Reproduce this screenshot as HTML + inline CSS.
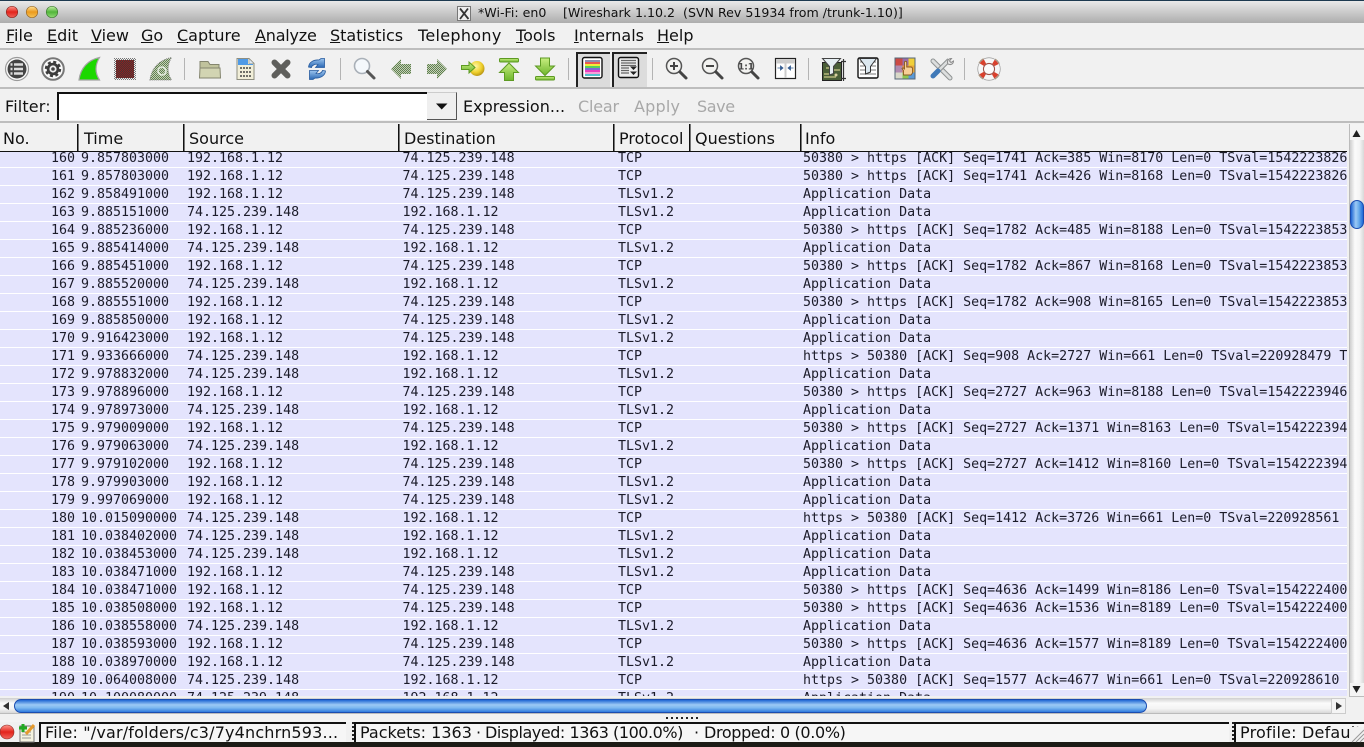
<!DOCTYPE html>
<html><head><meta charset="utf-8"><title>Wireshark</title>
<style>
html,body{margin:0;padding:0;width:1364px;height:747px;overflow:hidden;background:#f1f1f1}
body{position:relative;font-family:"DejaVu Sans",sans-serif;color:#111}
.a{position:absolute;white-space:pre}
#top{left:0;top:0;width:1364px;height:1px;background:#1d3a50}
#title{left:0;top:1px;width:1364px;height:22px;background:linear-gradient(#e9e9e9,#adadad)}
.tt{top:5px;font-size:12.6px;line-height:15px;color:#111}
.m{top:26px;font-size:16px;line-height:20px;color:#111}
.hl{left:0;width:1364px;height:2px;background:#bdbdbd}
.f{top:97px;font-size:16px;line-height:19px}
.g{color:#a8a8a8}
.h{top:129px;font-size:16px;line-height:20px;color:#111}
.v{top:124px;width:1px;height:27px;background:#111;box-shadow:1px 0 0 #777}
#hb{left:0;top:151px;width:1347px;height:1px;background:#111}
#list{left:0;top:152px;width:1347px;height:544px;overflow:hidden;background:#fff}
.r{position:absolute;left:0;width:1347px;height:17px;background:#e4e4fd;font:13.3px/17px "DejaVu Sans Mono",monospace;color:#1c1c2a;overflow:hidden}
.r b{font-weight:400;position:absolute;top:0;white-space:pre}
.r b:nth-child(1){right:1272px}
.r b:nth-child(2){left:81px}
.r b:nth-child(3){left:187px}
.r b:nth-child(4){left:402.500px}
.r b:nth-child(5){left:618px}
.r b:nth-child(6){left:803px}
.bx{top:722px;height:20px;background:#f6f6f6;border-top:2px solid #111;border-left:2px solid #111;box-sizing:border-box;overflow:hidden}
.s{top:723px;font-size:16px;line-height:19px;color:#111}
</style></head><body>
<div class="a" id="top"></div>
<div class="a" id="title"></div>
<div class="a tt" style="left:478px">*Wi-Fi: en0</div>
<div class="a tt" style="left:563px">[Wireshark 1.10.2  (SVN Rev 51934 from /trunk-1.10)]</div>

<div class="a m" style="left:6px"><u>F</u>ile</div>
<div class="a m" style="left:47px"><u>E</u>dit</div>
<div class="a m" style="left:91px"><u>V</u>iew</div>
<div class="a m" style="left:141px"><u>G</u>o</div>
<div class="a m" style="left:177px"><u>C</u>apture</div>
<div class="a m" style="left:255px;letter-spacing:-.2px"><u>A</u>nalyze</div>
<div class="a m" style="left:330px"><u>S</u>tatistics</div>
<div class="a m" style="left:418px;letter-spacing:.3px">Telephony</div>
<div class="a m" style="left:516px"><u>T</u>ools</div>
<div class="a m" style="left:574px"><u>I</u>nternals</div>
<div class="a m" style="left:657px"><u>H</u>elp</div>
<div class="a hl" style="top:48px"></div>
<div class="a hl" style="top:87px"></div>

<div class="a" style="left:576px;top:52px;width:34px;height:35px;background:#dcdcdc;border-top:2px solid #222;border-left:2px solid #222;box-sizing:border-box"></div>
<div class="a" style="left:612px;top:52px;width:35px;height:35px;background:#dcdcdc;border-top:2px solid #222;border-left:2px solid #222;box-sizing:border-box"></div>

<div class="a f" style="left:5px;letter-spacing:.15px">Filter:</div>
<div class="a" style="left:57px;top:92px;width:370px;height:28px;background:#fff;border-top:2px solid #111;border-left:2px solid #111;box-sizing:border-box"></div>
<div class="a" style="left:427px;top:92px;width:30px;height:28px;background:#efefef;border-right:1px solid #555;border-bottom:1px solid #555;border-top:1px solid #ccc;box-sizing:border-box"></div>
<div class="a f" style="left:463px">Expression...</div>
<div class="a f g" style="left:578px;letter-spacing:-.2px">Clear</div>
<div class="a f g" style="left:634px;letter-spacing:.2px">Apply</div>
<div class="a f g" style="left:697px;letter-spacing:-.4px">Save</div>
<div class="a hl" style="top:121px"></div>

<div class="a h" style="left:3px">No.</div>
<div class="a h" style="left:84px">Time</div>
<div class="a h" style="left:189px">Source</div>
<div class="a h" style="left:404px">Destination</div>
<div class="a h" style="left:619px">Protocol</div>
<div class="a h" style="left:695px">Questions</div>
<div class="a h" style="left:805px">Info</div>
<div class="a v" style="left:77px"></div>
<div class="a v" style="left:183px"></div>
<div class="a v" style="left:398px"></div>
<div class="a v" style="left:613px"></div>
<div class="a v" style="left:689px"></div>
<div class="a v" style="left:800px"></div>
<div class="a" id="hb"></div>

<div class="a" id="list">
<div class="r" style="top:-2px"><b>160</b><b>9.857803000</b><b>192.168.1.12</b><b>74.125.239.148</b><b>TCP</b><b>50380 &gt; https [ACK] Seq=1741 Ack=385 Win=8170 Len=0 TSval=1542223826</b></div>
<div class="r" style="top:16px"><b>161</b><b>9.857803000</b><b>192.168.1.12</b><b>74.125.239.148</b><b>TCP</b><b>50380 &gt; https [ACK] Seq=1741 Ack=426 Win=8168 Len=0 TSval=1542223826</b></div>
<div class="r" style="top:34px"><b>162</b><b>9.858491000</b><b>192.168.1.12</b><b>74.125.239.148</b><b>TLSv1.2</b><b>Application Data</b></div>
<div class="r" style="top:52px"><b>163</b><b>9.885151000</b><b>74.125.239.148</b><b>192.168.1.12</b><b>TLSv1.2</b><b>Application Data</b></div>
<div class="r" style="top:70px"><b>164</b><b>9.885236000</b><b>192.168.1.12</b><b>74.125.239.148</b><b>TCP</b><b>50380 &gt; https [ACK] Seq=1782 Ack=485 Win=8188 Len=0 TSval=1542223853</b></div>
<div class="r" style="top:88px"><b>165</b><b>9.885414000</b><b>74.125.239.148</b><b>192.168.1.12</b><b>TLSv1.2</b><b>Application Data</b></div>
<div class="r" style="top:106px"><b>166</b><b>9.885451000</b><b>192.168.1.12</b><b>74.125.239.148</b><b>TCP</b><b>50380 &gt; https [ACK] Seq=1782 Ack=867 Win=8168 Len=0 TSval=1542223853</b></div>
<div class="r" style="top:124px"><b>167</b><b>9.885520000</b><b>74.125.239.148</b><b>192.168.1.12</b><b>TLSv1.2</b><b>Application Data</b></div>
<div class="r" style="top:142px"><b>168</b><b>9.885551000</b><b>192.168.1.12</b><b>74.125.239.148</b><b>TCP</b><b>50380 &gt; https [ACK] Seq=1782 Ack=908 Win=8165 Len=0 TSval=1542223853</b></div>
<div class="r" style="top:160px"><b>169</b><b>9.885850000</b><b>192.168.1.12</b><b>74.125.239.148</b><b>TLSv1.2</b><b>Application Data</b></div>
<div class="r" style="top:178px"><b>170</b><b>9.916423000</b><b>192.168.1.12</b><b>74.125.239.148</b><b>TLSv1.2</b><b>Application Data</b></div>
<div class="r" style="top:196px"><b>171</b><b>9.933666000</b><b>74.125.239.148</b><b>192.168.1.12</b><b>TCP</b><b>https &gt; 50380 [ACK] Seq=908 Ack=2727 Win=661 Len=0 TSval=220928479 TSecr</b></div>
<div class="r" style="top:214px"><b>172</b><b>9.978832000</b><b>74.125.239.148</b><b>192.168.1.12</b><b>TLSv1.2</b><b>Application Data</b></div>
<div class="r" style="top:232px"><b>173</b><b>9.978896000</b><b>192.168.1.12</b><b>74.125.239.148</b><b>TCP</b><b>50380 &gt; https [ACK] Seq=2727 Ack=963 Win=8188 Len=0 TSval=1542223946</b></div>
<div class="r" style="top:250px"><b>174</b><b>9.978973000</b><b>74.125.239.148</b><b>192.168.1.12</b><b>TLSv1.2</b><b>Application Data</b></div>
<div class="r" style="top:268px"><b>175</b><b>9.979009000</b><b>192.168.1.12</b><b>74.125.239.148</b><b>TCP</b><b>50380 &gt; https [ACK] Seq=2727 Ack=1371 Win=8163 Len=0 TSval=154222394</b></div>
<div class="r" style="top:286px"><b>176</b><b>9.979063000</b><b>74.125.239.148</b><b>192.168.1.12</b><b>TLSv1.2</b><b>Application Data</b></div>
<div class="r" style="top:304px"><b>177</b><b>9.979102000</b><b>192.168.1.12</b><b>74.125.239.148</b><b>TCP</b><b>50380 &gt; https [ACK] Seq=2727 Ack=1412 Win=8160 Len=0 TSval=154222394</b></div>
<div class="r" style="top:322px"><b>178</b><b>9.979903000</b><b>192.168.1.12</b><b>74.125.239.148</b><b>TLSv1.2</b><b>Application Data</b></div>
<div class="r" style="top:340px"><b>179</b><b>9.997069000</b><b>192.168.1.12</b><b>74.125.239.148</b><b>TLSv1.2</b><b>Application Data</b></div>
<div class="r" style="top:358px"><b>180</b><b>10.015090000</b><b>74.125.239.148</b><b>192.168.1.12</b><b>TCP</b><b>https &gt; 50380 [ACK] Seq=1412 Ack=3726 Win=661 Len=0 TSval=220928561</b></div>
<div class="r" style="top:376px"><b>181</b><b>10.038402000</b><b>74.125.239.148</b><b>192.168.1.12</b><b>TLSv1.2</b><b>Application Data</b></div>
<div class="r" style="top:394px"><b>182</b><b>10.038453000</b><b>74.125.239.148</b><b>192.168.1.12</b><b>TLSv1.2</b><b>Application Data</b></div>
<div class="r" style="top:412px"><b>183</b><b>10.038471000</b><b>192.168.1.12</b><b>74.125.239.148</b><b>TLSv1.2</b><b>Application Data</b></div>
<div class="r" style="top:430px"><b>184</b><b>10.038471000</b><b>192.168.1.12</b><b>74.125.239.148</b><b>TCP</b><b>50380 &gt; https [ACK] Seq=4636 Ack=1499 Win=8186 Len=0 TSval=154222400</b></div>
<div class="r" style="top:448px"><b>185</b><b>10.038508000</b><b>192.168.1.12</b><b>74.125.239.148</b><b>TCP</b><b>50380 &gt; https [ACK] Seq=4636 Ack=1536 Win=8189 Len=0 TSval=154222400</b></div>
<div class="r" style="top:466px"><b>186</b><b>10.038558000</b><b>74.125.239.148</b><b>192.168.1.12</b><b>TLSv1.2</b><b>Application Data</b></div>
<div class="r" style="top:484px"><b>187</b><b>10.038593000</b><b>192.168.1.12</b><b>74.125.239.148</b><b>TCP</b><b>50380 &gt; https [ACK] Seq=4636 Ack=1577 Win=8189 Len=0 TSval=154222400</b></div>
<div class="r" style="top:502px"><b>188</b><b>10.038970000</b><b>192.168.1.12</b><b>74.125.239.148</b><b>TLSv1.2</b><b>Application Data</b></div>
<div class="r" style="top:520px"><b>189</b><b>10.064008000</b><b>74.125.239.148</b><b>192.168.1.12</b><b>TCP</b><b>https &gt; 50380 [ACK] Seq=1577 Ack=4677 Win=661 Len=0 TSval=220928610</b></div>
<div class="r" style="top:538px"><b>190</b><b>10.100080000</b><b>74.125.239.148</b><b>192.168.1.12</b><b>TLSv1.2</b><b>Application Data</b></div>
</div>

<!-- vertical scrollbar -->
<div class="a" style="left:1349px;top:124px;width:15px;height:573px;background:linear-gradient(90deg,#cfcfcf,#fbfbfb 35%,#f4f4f4 70%,#d8d8d8);border-left:1px solid #bbb;box-sizing:border-box"></div>
<div class="a" style="left:1349px;top:124px;width:15px;height:16px;background:#f4f4f4;border-left:1px solid #bbb;box-sizing:border-box"></div>
<div class="a" style="left:1349px;top:683px;width:15px;height:14px;background:#f4f4f4;border-left:1px solid #bbb;border-bottom:1px solid #bbb;box-sizing:border-box"></div>
<div class="a" style="left:1350px;top:200px;width:14px;height:29px;border-radius:7px;box-sizing:border-box;border:1px solid #1a4cb0;background:linear-gradient(90deg,#1f66d4,#9cc9f5 40%,#6aaceb 65%,#1f6ad8)"></div>

<!-- horizontal scrollbar -->
<div class="a" style="left:0;top:698px;width:1345px;height:16px;background:linear-gradient(#cfcfcf,#fbfbfb 35%,#f4f4f4 70%,#d8d8d8);border-bottom:1px solid #bbb;box-sizing:border-box"></div>
<div class="a" style="left:14px;top:699px;width:1133px;height:14px;border-radius:7px;box-sizing:border-box;border:1px solid #1a4cb0;background:linear-gradient(#1f66d4,#9cc9f5 40%,#7db8f0 65%,#2f7ade)"></div>
<div class="a" style="left:1331px;top:698px;width:15px;height:16px;background:#f4f4f4;border:1px solid #ccc;box-sizing:border-box"></div>

<!-- status bar -->
<div class="a" style="left:666px;top:717px;width:34px;height:2px;background:repeating-linear-gradient(90deg,#222 0 2px,transparent 2px 5px)"></div>
<div class="a" style="left:0;top:720px;width:1364px;height:2px;background:#f4f4f4"></div>
<div class="a bx" style="left:39px;width:307px"></div>
<div class="a bx" style="left:354px;width:875px"></div>
<div class="a bx" style="left:1234px;width:130px"></div>
<div class="a s" style="left:45px;letter-spacing:.17px">File: "/var/folders/c3/7y4nchrn593...</div>
<div class="a s" style="left:360px">Packets: 1363</div>
<div class="a s" style="left:476px">·</div>
<div class="a s" style="left:485px;letter-spacing:-.45px">Displayed: 1363 (100.0%)</div>
<div class="a s" style="left:694px">·</div>
<div class="a s" style="left:704px;letter-spacing:-.35px">Dropped: 0 (0.0%)</div>
<div class="a s" style="left:1240px;width:124px;overflow:hidden;letter-spacing:.2px">Profile: Default</div>
<div class="a" style="left:352px;top:722px;width:2px;height:20px;background:repeating-linear-gradient(#222 0 2px,transparent 2px 4px)"></div>
<div class="a" style="left:1232px;top:722px;width:2px;height:20px;background:repeating-linear-gradient(#222 0 2px,transparent 2px 4px)"></div>
<div class="a" style="left:0;top:742px;width:1364px;height:5px;background:#1c1b16"></div>

<svg class="a" style="left:0;top:0" width="1364" height="747" viewBox="0 0 1364 747">
<defs>
<pattern id="dg" width="2" height="2" patternUnits="userSpaceOnUse"><rect width="2" height="2" fill="#c4cfb6"/><rect width="1" height="1" fill="#5f8050"/><rect x="1" y="1" width="1" height="1" fill="#5f8050"/></pattern>
<pattern id="dr" width="2" height="2" patternUnits="userSpaceOnUse"><rect width="2" height="2" fill="#453535"/><rect width="1" height="1" fill="#8e2020"/><rect x="1" y="1" width="1" height="1" fill="#8e2020"/></pattern>
<pattern id="dk" width="2" height="2" patternUnits="userSpaceOnUse"><rect width="1" height="1" fill="#777"/><rect x="1" y="1" width="1" height="1" fill="#777"/></pattern>
<linearGradient id="rl" x1="0" y1="0" x2="0" y2="1"><stop offset="0" stop-color="#ff9a90"/><stop offset=".5" stop-color="#e3241c"/><stop offset="1" stop-color="#f0655c"/></linearGradient>
<linearGradient id="yl" x1="0" y1="0" x2="0" y2="1"><stop offset="0" stop-color="#ffe39a"/><stop offset=".5" stop-color="#eb9a1e"/><stop offset="1" stop-color="#f7c65a"/></linearGradient>
<linearGradient id="gl" x1="0" y1="0" x2="0" y2="1"><stop offset="0" stop-color="#c6f0a8"/><stop offset=".5" stop-color="#52b53a"/><stop offset="1" stop-color="#93dc78"/></linearGradient>
<linearGradient id="ga" x1="0" y1="0" x2="0" y2="1"><stop offset="0" stop-color="#c8ee80"/><stop offset="1" stop-color="#6db52c"/></linearGradient>
<radialGradient id="ball" cx=".4" cy=".35" r=".7"><stop offset="0" stop-color="#fff6a8"/><stop offset=".6" stop-color="#efd02c"/><stop offset="1" stop-color="#b08c10"/></radialGradient>
<linearGradient id="bl" x1="0" y1="0" x2="0" y2="1"><stop offset="0" stop-color="#9cc4ee"/><stop offset="1" stop-color="#2a68b4"/></linearGradient>
<g id="mag"><circle cx="-3" cy="-3" r="7.500" fill="#f2f2f0" stroke="#555" stroke-width="1.500"/><path d="M3 3L9 9" stroke="#444" stroke-width="3" stroke-linecap="round"/></g>
</defs>

<!-- traffic lights -->
<circle cx="12" cy="12" r="5.700" fill="url(#rl)" stroke="#8a2a24" stroke-width=".7"/>
<circle cx="32" cy="12" r="5.700" fill="url(#yl)" stroke="#96682a" stroke-width=".7"/>
<circle cx="52" cy="12" r="5.700" fill="url(#gl)" stroke="#3f7a34" stroke-width=".7"/>
<!-- X11 icon -->
<rect x="457.500" y="6.500" width="13" height="14" fill="#eee" stroke="#777"/>
<path d="M460 8.500L468.500 19M468 8.500L460 19" stroke="#333" stroke-width="1.800"/>

<!-- interfaces -->
<circle cx="17" cy="69" r="11.500" fill="#fbfbfb" stroke="#999" stroke-width="1.200"/>
<circle cx="17" cy="69" r="9.500" fill="#444"/>
<path d="M14 64.500H23M14 69H23M14 73.500H23" stroke="#ddd" stroke-width="2.400"/>
<path d="M10.500 64.500h2M10.500 69h2M10.500 73.500h2" stroke="#ddd" stroke-width="2.400"/>
<!-- options -->
<circle cx="53" cy="69" r="10.800" fill="#fbfbfb" stroke="#777" stroke-width="2"/>
<circle cx="53" cy="69" r="6.300" fill="#3c3c3c"/>
<circle cx="53" cy="69" r="7" fill="none" stroke="#3c3c3c" stroke-width="2.400" stroke-dasharray="3 2.500"/>
<circle cx="53" cy="69" r="3.600" fill="#eee"/>
<circle cx="53" cy="69" r="1.800" fill="#444"/>
<!-- start fin -->
<path d="M79 80C80.500 68 88 60 99.500 57.500C95 65 95 73 99.500 80Z" fill="#1bd800" stroke="#a4a4a4" stroke-width="1.200"/>
<!-- stop -->
<rect x="114" y="58" width="22" height="22" fill="url(#dk)"/>
<rect x="116" y="60" width="18" height="18" fill="url(#dr)"/>
<!-- restart -->
<path d="M150 80C151.500 68 159 60 171.500 57.500C167 65 167 73 171.500 80Z" fill="url(#dg)" stroke="#888" stroke-width="1" stroke-dasharray="1 1"/>
<circle cx="162" cy="71" r="4" fill="none" stroke="#e4ece0" stroke-width="1.600"/>

<path d="M184.500 58V80M340.500 58V80M568.500 58V80M652.500 58V80M808.500 58V80M964.500 58V80" stroke="#b4b4b4" stroke-width="1"/>

<!-- open folder -->
<path d="M200 61.500h8l2 3h9v11h-19z" fill="#c0c29c" stroke="#84856e"/>
<path d="M199.500 78L200 68h20l0.500 10z" fill="#d2d4b2" stroke="#84856e"/>
<!-- file -->
<path d="M237 58.500h12l5 5V79.500H237z" fill="#f1eed8" stroke="#8d8d80"/>
<path d="M238 59h10v5h5v1h-15z" fill="#4f9ae6"/>
<path d="M249 58.500l5 5h-5z" fill="#dfe8f2" stroke="#8d8d80" stroke-width=".6"/>
<path d="M240 68h11M240 72h11M240 76h11" stroke="#6f6f68" stroke-width="2" stroke-dasharray="2 1"/>
<!-- close -->
<path d="M274.500 62.500L287.500 75.500M287.500 62.500L274.500 75.500" stroke="#5f5f5c" stroke-width="6" stroke-linecap="round"/>
<!-- reload -->
<path d="M308.500 67C309 62 314 59.500 319 60l2-1.500 3.500 0v9l-9 0 2.500-3c-3-.8-6 .8-6.500 3z" fill="url(#bl)" stroke="#275b9e" stroke-width=".8"/>
<path d="M325.500 71C325 76 320 78.500 315 78l-2 1.500-3.500 0v-9l9 0-2.500 3c3 .8 6-.8 6.500-3z" fill="url(#bl)" stroke="#275b9e" stroke-width=".8"/>
<!-- find -->
<g transform="translate(365 69)"><circle cx="-3" cy="-3" r="7.500" fill="#f4f8fc" stroke="#a9b0b8" stroke-width="1.600"/><path d="M2.500 2.500L9 9" stroke="#555" stroke-width="3" stroke-linecap="round"/></g>
<!-- back / forward -->
<path d="M391 69L401 59V64H411V74H401V79Z" fill="url(#dg)"/>
<path d="M447 69L437 59V64H427V74H437V79Z" fill="url(#dg)"/>
<!-- goto -->
<circle cx="477" cy="68.500" r="7.500" fill="url(#ball)"/>
<path d="M461.500 69.500v-4h7.500v-3.500l6 5.500-6 5.500v-3.500z" fill="url(#ga)" stroke="#5d9a22" stroke-width="1"/>
<!-- first -->
<rect x="499.500" y="58.500" width="19" height="3.500" rx="1" fill="url(#ga)" stroke="#5d9a22"/>
<path d="M509 63L518.500 72.500H513.500V80.500H504.500V72.500H499.500Z" fill="url(#ga)" stroke="#5d9a22"/>
<!-- last -->
<rect x="535.500" y="76.500" width="19" height="3.500" rx="1" fill="url(#ga)" stroke="#5d9a22"/>
<path d="M545 75.500L554.500 66H549.500V58H540.500V66H535.500Z" fill="url(#ga)" stroke="#5d9a22"/>
<!-- colorize -->
<rect x="582.500" y="57.500" width="19.500" height="20.500" rx="2" fill="#fff" stroke="#111" stroke-width="1.400"/>
<rect x="585" y="60" width="15" height="2" fill="#8f8fb0"/><rect x="585" y="62" width="15" height="2" fill="#e85a50"/><rect x="585" y="64" width="15" height="2" fill="#f3ec38"/><rect x="585" y="66" width="15" height="2" fill="#58d05c"/><rect x="585" y="68" width="15" height="2" fill="#7e6ad6"/><rect x="585" y="70" width="15" height="2" fill="#e83ec0"/><rect x="585" y="72" width="15" height="2" fill="#f4a0d8"/><rect x="585" y="74" width="15" height="2" fill="#50c0cc"/>
<!-- autoscroll -->
<rect x="618.500" y="57.500" width="20" height="20" rx="2" fill="#eee" stroke="#111" stroke-width="1.400"/>
<path d="M621 60.500h15M621 63h15M621 65.500h15M621 68h8M621 70.500h8M621 73h8" stroke="#666" stroke-width="1.200"/>
<path d="M630 66.500h7l-3.500 3.500zM630 71.500h7l-3.500 3.500z" fill="#222"/>

<!-- zoom in/out/1:1 -->
<g transform="translate(677 69)"><use href="#mag"/><path d="M-7-3H1M-3-7V1" stroke="#444" stroke-width="2"/></g>
<g transform="translate(713 69)"><use href="#mag"/><path d="M-7-3H1" stroke="#444" stroke-width="2"/></g>
<g transform="translate(749 69)"><use href="#mag"/><text x="-3" y="0.500" font-family="DejaVu Sans" font-size="9" font-weight="700" text-anchor="middle" fill="#444">1:1</text></g>
<!-- resize -->
<rect x="775.500" y="58.500" width="20" height="20" fill="#fff" stroke="#222" stroke-width="1.200"/>
<rect x="776.500" y="59.500" width="18" height="4" fill="#ccc"/>
<path d="M785.500 60V78" stroke="#ccc" stroke-width="2"/>
<path d="M777.500 68h3M793.500 68h-3M780.500 66v4l2.500-2zM790.500 66v4l-2.500-2z" fill="#345c90" stroke="#345c90" stroke-width=".8"/>
<!-- capture filter -->
<rect x="822.500" y="62.500" width="19" height="18" fill="#4a5f38" stroke="#222"/>
<path d="M824 77h12M824 74h6M832 70h8M826 68h3" stroke="#b5b67a" stroke-width="1.500"/>
<circle cx="836" cy="75" r="1.500" fill="#d8d0a0"/>
<path d="M822.500 58.500H840.500L833.500 66.500V73.500L829.500 75V66.500Z" fill="#e6eef2" stroke="#444"/>
<path d="M843.500 59V81M841 61.500h5M841 78.500h5" stroke="#333" stroke-width="1.200"/>
<!-- display filter -->
<rect x="858" y="58" width="20" height="20" rx="1.500" fill="#fff" stroke="#111" stroke-width="1.400"/>
<path d="M860 62h16M860 66h16M860 70h16M860 74h16" stroke="#777"/>
<path d="M859.500 58.500H876.500L870.500 66.500V72L865.500 74V66.500Z" fill="#dce8f0" stroke="#333"/>
<!-- coloring rules -->
<rect x="895" y="58" width="20" height="21" fill="#fff" stroke="#567"/>
<rect x="895.500" y="58.500" width="7" height="7" fill="#cc4a44"/><rect x="902.500" y="58.500" width="6" height="7" fill="#9a6ea8"/><rect x="908.500" y="58.500" width="6" height="7" fill="#f0cf3a"/>
<rect x="895.500" y="65.500" width="7" height="7" fill="#b08ab0"/><rect x="902.500" y="65.500" width="6" height="7" fill="#e88a3a"/><rect x="908.500" y="65.500" width="6" height="7" fill="#e8a83a"/>
<rect x="895.500" y="72.500" width="7" height="6" fill="#d8d8c8"/><rect x="902.500" y="72.500" width="6" height="6" fill="#8cc850"/><rect x="908.500" y="72.500" width="6" height="6" fill="#5a9ad8"/>
<path d="M903.500 75v-4.500l-1.500-2 1-.7 1.500 1.200V62.500c0-1.600 2.200-1.600 2.200 0v4.500h4c1.500 0 1.800 1 1.800 2v4l-1.500 2z" fill="#f6cf96" stroke="#8a5a20" stroke-width=".9"/>
<!-- preferences -->
<path d="M933 61L950 78" stroke="#8e9292" stroke-width="5" stroke-linecap="round"/>
<path d="M933 61L950 78" stroke="#dcdede" stroke-width="3" stroke-linecap="round"/>
<path d="M949 60L936 73" stroke="#8e9292" stroke-width="4.500"/>
<path d="M949 60L936 73" stroke="#dcdede" stroke-width="2.500"/>
<path d="M951.500 58.500c-3.500 0-5 3-3.500 5.500 2.500 1.500 5.500 0 5.500-3l-2.500 1.500-1.500-1.500z" fill="#e4e4e4" stroke="#8a8a8a"/>
<path d="M938 71L933 76" stroke="#3f79b8" stroke-width="5" stroke-linecap="round"/>
<!-- help -->
<circle cx="989" cy="69" r="11.500" fill="none" stroke="#a88a60" stroke-width="1.400" stroke-dasharray="6 12.060" stroke-dashoffset="-6"/>
<circle cx="989" cy="69" r="8.500" fill="#fff" stroke="#999" stroke-width="6.200"/>
<circle cx="989" cy="69" r="8.500" fill="none" stroke="#f6f6f6" stroke-width="4.800"/>
<circle cx="989" cy="69" r="8.500" fill="none" stroke="#d9402c" stroke-width="4.800" stroke-dasharray="4.500 8.850" stroke-dashoffset="-4.430"/>
<circle cx="989" cy="69" r="5.500" fill="#fbfbfb" stroke="#a04a40" stroke-width=".9"/>

<!-- filter dropdown arrow -->
<path d="M436 103.500H447.500L441.700 109.500Z" fill="#111"/>
<!-- scroll arrows -->
<path d="M1356.500 130L1352.500 137H1360.500Z" fill="#222"/>
<path d="M1356.500 693L1352.500 686H1360.500Z" fill="#222"/>
<path d="M3 706L9 702V710Z" fill="#333"/>
<path d="M1342 706L1336 702V710Z" fill="#333"/>
<!-- status icons -->
<circle cx="7" cy="732" r="7" fill="url(#rl)" stroke="#8a2a24" stroke-width=".6"/>
<rect x="20" y="726" width="14" height="16" fill="#f5f3e0" stroke="#777"/>
<path d="M22 732h9M22 735h9M22 738h9" stroke="#999"/>
<path d="M23 724v8M19 728h8" stroke="#22aa22" stroke-width="3"/>
<path d="M26 734L34 725" stroke="#e69a2c" stroke-width="3"/>
<!-- resize grip -->
<rect x="1350" y="727" width="14" height="15" fill="#f1f1f1"/>
<path d="M1352 742L1364 730M1356 742L1364 734M1360 742L1364 738" stroke="#999"/>
</svg>
</body></html>
